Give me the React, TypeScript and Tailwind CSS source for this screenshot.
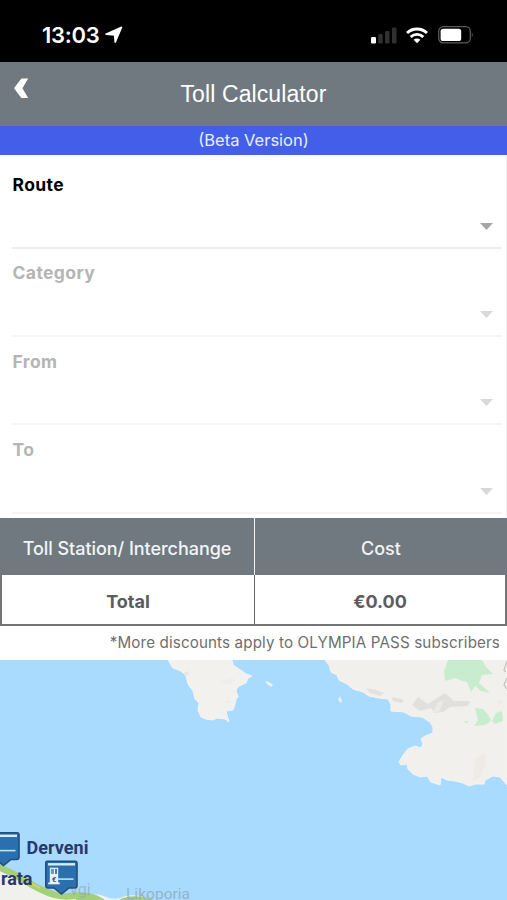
const fields = [
  { label: "Route", enabled: true },
  { label: "Category", enabled: false },
  { label: "From", enabled: false },
  { label: "To", enabled: false },
];

function StatusBar() {
  return (
    <div className="flex h-[62px] items-start justify-between bg-black pl-[42px] pr-[33px] pt-[22px]">
      <div className="flex items-center gap-[6px]">
        <span className="font-['Inter',sans-serif] text-[22px] font-semibold leading-[26px] tracking-[-0.3px] text-white">
          13:03
        </span>
        <svg width="18" height="18" viewBox="0 0 18 18" className="fill-white">
          <path
            d="M16.6 1.2 L10.2 16.2 L9.6 9 L1 8.2Z"
            stroke="#fff"
            strokeWidth="1.5"
            strokeLinejoin="round"
          />
        </svg>
      </div>
      <div className="flex items-center pt-[4px]">
        <svg width="26" height="17" viewBox="0 0 26 17">
          <rect x="0" y="10" width="5" height="6.5" rx="1.2" fill="#fff" />
          <rect x="7.2" y="7" width="4.5" height="9.5" rx="1.2" fill="#303030" />
          <rect x="14" y="4" width="4.5" height="12.5" rx="1.2" fill="#303030" />
          <rect x="21" y="0.5" width="4.5" height="16" rx="1.2" fill="#303030" />
        </svg>
        <svg width="22" height="17" viewBox="0 0 22 17" className="ml-[9px]" fill="none" stroke="#fff">
          <path d="M1 6 A14.3 14.3 0 0 1 21 6" strokeWidth="3" />
          <path d="M4.7 9.9 A9 9 0 0 1 17.3 9.9" strokeWidth="2.8" />
          <path d="M11 16.2 L7.6 12.8 A4.8 4.8 0 0 1 14.4 12.8Z" fill="#fff" stroke="none" />
        </svg>
        <svg width="36" height="18" viewBox="0 0 36 18" className="ml-[10px]">
          <rect x="0.7" y="0.7" width="31.6" height="16.2" rx="4.6" fill="none" stroke="#5a5a5a" strokeWidth="1.3" />
          <rect x="2.6" y="2.7" width="20.6" height="12.3" rx="2.6" fill="#fff" />
          <path d="M33.8 6 Q35.7 8.8 33.8 11.6Z" fill="#5a5a5a" />
        </svg>
      </div>
    </div>
  );
}

function Header() {
  return (
    <header className="grid h-[64px] grid-cols-[60px_1fr_60px] bg-[#6f797f]">
      <button aria-label="Back" className="flex items-start pl-[14px] pt-[16px]">
        <svg width="15" height="21" viewBox="0 0 15 21" className="fill-white">
          <path d="M7.4 0.5 H14.2 L8.4 10.3 L14.2 20 H7.4 L0 10.3Z" />
        </svg>
      </button>
      <h1 className="pt-[18px] text-center font-['Liberation_Sans',sans-serif] text-[23px] leading-[28px] tracking-[0.1px] text-white">
        Toll Calculator
      </h1>
    </header>
  );
}

function SelectField({ label, enabled }: { label: string; enabled: boolean }) {
  return (
    <div
      className={`ml-[12px] mr-[4px] flex h-[88.3px] flex-col justify-between border-b-2 pr-[9px] pt-[12.5px] ${
        enabled ? "border-[#ededed]" : "border-[#f5f5f5]"
      }`}
    >
      <label
        className={`pl-[0.5px] font-['Inter',sans-serif] text-[17.5px] font-bold leading-[24px] tracking-[0.4px] ${
          enabled ? "text-black" : "text-[#b5b5b5]"
        }`}
      >
        {label}
      </label>
      <svg width="13" height="7" viewBox="0 0 13 7" className={`mb-[17px] self-end ${enabled ? "fill-[#a5a5a5]" : "fill-[#d9d9d9]"}`}>
        <path d="M0 0 H13 L6.5 7Z" />
      </svg>
    </div>
  );
}

function CostTable() {
  return (
    <div className="font-['Inter',sans-serif]">
      <div className="grid h-[57px] grid-cols-[255px_1fr] items-stretch bg-[#6f797f] text-center text-[18px] font-medium text-[#f1f5f9]">
        <div className="flex items-center justify-center border-r border-[#f3f5f6] pt-[4px] tracking-[-0.05px]">
          Toll Station/ Interchange
        </div>
        <div className="flex items-center justify-center pt-[4px]">Cost</div>
      </div>
      <div className="grid h-[51px] grid-cols-[253px_1fr] border-x-2 border-b-2 border-[#757575] text-[18px] font-bold text-[#5c5c5c]">
        <div className="flex items-center justify-center border-r border-[#666666] pt-[3px]">Total</div>
        <div className="flex items-center justify-center pt-[3px]">€0.00</div>
      </div>
      <p className="h-[34px] pr-[7px] pt-[5px] text-right text-[15.2px] leading-[24px] tracking-[0.12px] text-[#6f6f6f]">
        *More discounts apply to OLYMPIA PASS subscribers
      </p>
    </div>
  );
}

function TollPin({ x, y, booth = false }: { x: number; y: number; booth?: boolean }) {
  return (
    <g transform={`translate(${x} ${y})`}>
      <path
        d="M2 0.8 H30 Q32 0.8 32 2.8 V25 Q32 27.5 29.5 27.5 H24 L16.5 33.5 L9 27.5 H3 Q0.8 27.5 0.8 25 V2.8 Q0.8 0.8 2 0.8Z"
        fill="#2a70ae"
        stroke="#244d7c"
        strokeWidth="1.6"
      />
      <rect x="3" y="2.6" width="27" height="2.4" fill="#d9ecfa" />
      <rect x="11" y="17.8" width="17.5" height="1.6" fill="#c4e0f5" />
      {booth && (
        <>
          <rect x="4.8" y="7.2" width="8.4" height="15.8" fill="#e9f1f8" />
          <rect x="5.8" y="8.4" width="3.2" height="5" fill="#6f9ac0" />
          <rect x="10" y="8.4" width="2" height="5" fill="#3f7ab0" />
          <rect x="3.2" y="22" width="11.5" height="1.8" fill="#e9f1f8" />
          <text x="6.8" y="21" fontFamily="Roboto, sans-serif" fontSize="8" fontWeight="700" fill="#2d5585">
            €
          </text>
        </>
      )}
    </g>
  );
}

function TollMap() {
  return (
    <svg width="507" height="240" viewBox="0 660 507 240" className="block bg-[#a9daff]">
      {/* north coast */}
      <path
        d="M168 660 L173 668 L181 671 L186 676 L188 684 L193 691 L195 699 L199 703 L198 710 L201 717 L206 719 L213 720 L217 718 L225 719 L229 722 L227 715 L226 711 L233 710 L235 704 L236 699 L238 697 L236 690 L239 686 L246 683 L248 678 L252 676 L246 674 L242 671 L236 667 L233 665 L232 660Z"
        fill="#f2f1ee"
        stroke="#f6f5f2"
      />
      <path d="M183 673 L188 671 L189 674 L186 676Z" fill="#e8e6e2" />
      <path d="M219 682 L233 678 L235 681 L228 684Z M223 703 L230 700 L230 703Z" fill="#efede9" />
      <path d="M265 681 L269 682 L273 685 L271 687 L267 684Z" fill="#eef2ef" />
      <path d="M340 696 L342 701 L341 703 L338 700Z" fill="#eef2ef" />
      <path
        d="M325 660 L329 665 L331 672 L337 675 L339 680 L347 684 L353 689 L363 692 L369 696 L379 698 L388 699 L391 704 L391 711 L404 712 L411 716 L422 717 L430 722 L433 727 L433 733 L425 736 L421 739 L423 744 L421 748 L415 746 L408 749 L403 755 L399 762 L401 765 L407 764 L408 769 L413 774 L420 777 L427 776 L431 782 L440 785 L441 777 L447 780 L455 781 L463 783 L469 786 L475 784 L484 784 L485 780 L493 776 L500 777 L507 785 V660Z"
        fill="#f1f0ec"
        stroke="#f5f4f0"
      />
      {/* hills */}
      <path d="M366 688 L376 690 L384 693 L380 696 L370 693Z" fill="#e4e1dc" />
      <path d="M392 697 L404 700 L402 703 L393 701Z M412 705 L418 697 L428 704 L434 700 L445 693 L454 701 L470 701 L468 706 L450 707 L443 712 L435 713 L431 708 L420 711Z" fill="#e1e0dc" />
      <path d="M433 713 L437 703 L444 700 L439 712Z" fill="#ebeae6" />
      <path d="M475 758 L486 753 L485 765 L480 777 L473 781Z M496 701 L503 700 L500 705Z" fill="#eeebe7" />
      {/* parks */}
      <path d="M448 660 H482 L486 667 L493 674 L482 675 L479 683 L490 693 L481 691 L475 686 L471 692 L467 682 L462 681 L455 678 L445 681 L444 671Z" fill="#c8edce" />
      <path d="M475 708 L483 709 L489 716 L491 721 L485 725 L474 726 L478 720Z M492 721 L496 713 L502 711 L503 721 L495 724Z M464 721 L468 721 L467 724Z" fill="#c8edce" />
      <path d="M507 661 L504 670 L506 672 M507 678 L504 685 L507 689" stroke="#c3c1bf" strokeWidth="1.2" fill="none" />
      {/* south coast and motorway */}
      <path d="M0 867 C20 873 38 888 58 894 C80 899 95 888 112 900 H0Z" fill="#f0f0ec" />
      <path d="M98 900 C105 895 115 902 125 896 C135 894 143 896 150 900Z" fill="#f0f0ec" />
      <path d="M-2 867 C12 872 25 881 36 887 C48 893 58 898 72 896 C86 894 95 897 102 902" fill="none" stroke="#a4d077" strokeWidth="6.5" />
      <path d="M76 895 C85 891 97 894 104 900 H76Z M119 900 C128 894 143 896 154 900Z" fill="#a3cf7b" />
      <path d="M30 883 L40 888" stroke="#e0cf6b" strokeWidth="1.5" />
      <text x="70" y="895" fontFamily="Roboto, sans-serif" fontSize="16" fill="#8ba3ad" fillOpacity="0.6">
        vgi
      </text>
      <text x="126" y="899" fontFamily="Roboto, sans-serif" fontSize="15.500" fill="#8fabbd" fillOpacity="0.85" textLength="64">
        Likoporia
      </text>
      <TollPin x={-13} y={832} />
      <TollPin x={45} y={860.5} booth />
      <g fontFamily="Roboto, sans-serif" fontSize="18" fontWeight="700" fill="#29386b">
        <text x="26.500" y="854" textLength="62">
          Derveni
        </text>
        <text x="1" y="885" textLength="31.500">
          rata
        </text>
      </g>
    </svg>
  );
}

export default function App() {
  return (
    <main className="flex h-[900px] w-[507px] flex-col overflow-hidden bg-white">
      <StatusBar />
      <Header />
      <div className="h-[29px] bg-[#435fea] text-center font-['Inter',sans-serif] text-[16.5px] leading-[29px] text-[#e8edff]">
        (Beta Version)
      </div>
      <section className="h-[363px] border-r border-[#eeeeee] pt-[5.5px]">
        {fields.map((field) => (
          <SelectField key={field.label} label={field.label} enabled={field.enabled} />
        ))}
      </section>
      <CostTable />
      <TollMap />
    </main>
  );
}
